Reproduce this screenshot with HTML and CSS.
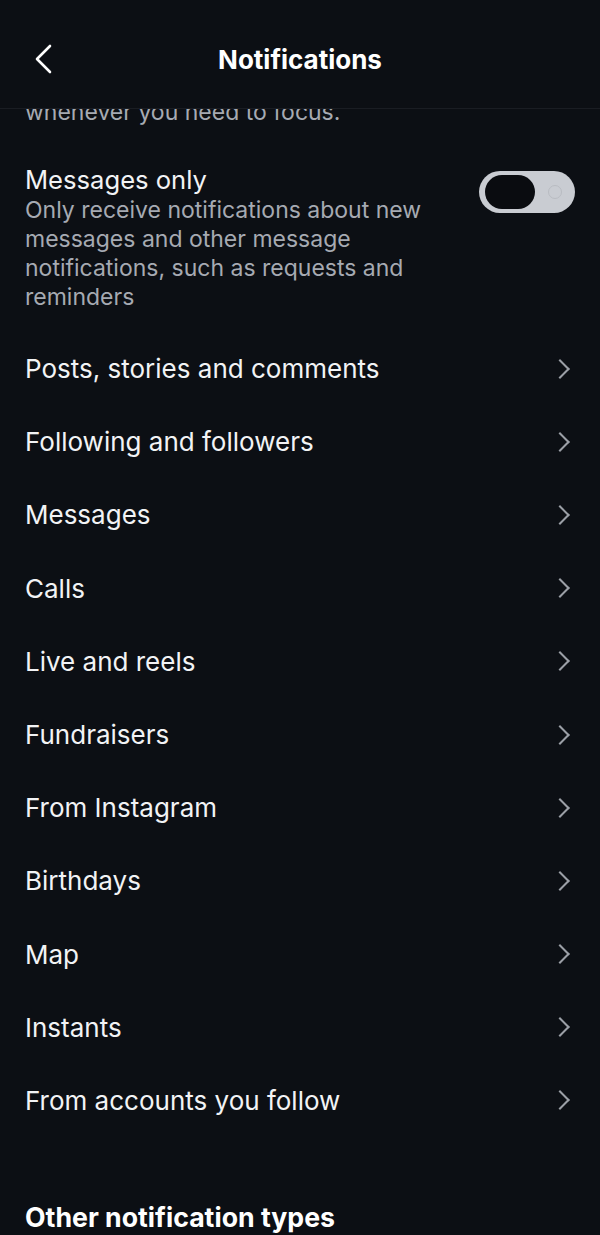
FILE: index.html
```html
<!DOCTYPE html>
<html lang="en">
<head>
  <meta charset="UTF-8" />
  <meta name="viewport" content="width=device-width, initial-scale=1.0" />
  <title>Notifications</title>
  <link rel="stylesheet" href="styles.css">
</head>
<body>
  <div class="header">
    <a href="#" class="back">
      <svg width="20" height="30" viewBox="0 0 20 30"><path d="M17 2 L4 15 L17 28" fill="none" stroke="#fff" stroke-width="2.6" stroke-linecap="round" stroke-linejoin="round"/></svg>
    </a>
    <h1>Notifications</h1>
  </div>

  <div class="content">
    <p class="cut">whenever you need to focus.</p>

    <div class="toggle-row">
      <div class="toggle-text">
        <div class="label">Messages only</div>
        <div class="desc">Only receive notifications about new messages and other message notifications, such as requests and reminders</div>
      </div>
      <div class="switch"><span class="knob"></span><span class="ring"></span></div>
    </div>

    <div class="list">
      <a href="#" class="row">Posts, stories and comments<span class="chev"></span></a>
      <a href="#" class="row">Following and followers<span class="chev"></span></a>
      <a href="#" class="row">Messages<span class="chev"></span></a>
      <a href="#" class="row">Calls<span class="chev"></span></a>
      <a href="#" class="row">Live and reels<span class="chev"></span></a>
      <a href="#" class="row">Fundraisers<span class="chev"></span></a>
      <a href="#" class="row">From Instagram<span class="chev"></span></a>
      <a href="#" class="row">Birthdays<span class="chev"></span></a>
      <a href="#" class="row">Map<span class="chev"></span></a>
      <a href="#" class="row">Instants<span class="chev"></span></a>
      <a href="#" class="row">From accounts you follow<span class="chev"></span></a>
    </div>

    <h2>Other notification types</h2>
  </div>
</body>
</html>
```

FILE: styles.css
```css
* {
  box-sizing: border-box;
}
body {
  font-family: Inter, Roboto, 'Noto Sans', sans-serif;
  margin: 0;
  padding: 0;
  background: #0c0f14;
  color: #f2f3f5;
  height: 1235px;
  overflow: hidden;
  display: flex;
  flex-direction: column;
}
.header {
  height: 109px;
  flex-shrink: 0;
  display: flex;
  align-items: center;
  justify-content: center;
  position: relative;
  border-bottom: 1px solid #1a1d23;
  padding-top: 10px;
}
.header h1 {
  margin: 0;
  font-size: 26px;
  font-weight: 700;
  color: #fff;
}
.back {
  position: absolute;
  left: 33px;
  top: 44px;
  display: flex;
}
.content {
  flex: 1;
  overflow: hidden;
}
.cut {
  margin: -11px 0 0;
  padding: 0 25px;
  font-size: 23px;
  line-height: 29px;
  color: #a6aab2;
}
.toggle-row {
  display: flex;
  justify-content: space-between;
  align-items: flex-start;
  padding: 37px 25px 0;
}
.toggle-text {
  width: 430px;
}
.label {
  font-size: 25.6px;
  line-height: 32px;
  color: #f2f3f5;
}
.desc {
  font-size: 23px;
  line-height: 29px;
  color: #a6aab2;
}
.switch {
  width: 96px;
  height: 42px;
  margin-top: 7px;
  border-radius: 21px;
  background: #c9ccd2;
  display: flex;
  align-items: center;
  justify-content: space-between;
  padding: 0 13px 0 6px;
  flex-shrink: 0;
}
.knob {
  width: 50px;
  height: 34px;
  border-radius: 17px;
  background: #0a0c10;
}
.ring {
  width: 14px;
  height: 14px;
  border-radius: 50%;
  border: 1.5px solid #b9bcc2;
}
.list {
  margin-top: 20px;
}
.row {
  display: flex;
  align-items: center;
  justify-content: space-between;
  height: 73.2px;
  padding: 0 33px 0 25px;
  font-size: 26px;
  color: #f2f3f5;
  text-decoration: none;
}
.chev {
  width: 14px;
  height: 14px;
  border-top: 2px solid #9b9fa6;
  border-right: 2px solid #9b9fa6;
  transform: rotate(45deg);
}
h2 {
  margin: 64px 0 0;
  padding: 0 25px;
  font-size: 26.7px;
  line-height: 32px;
  font-weight: 700;
  color: #fff;
}
```
